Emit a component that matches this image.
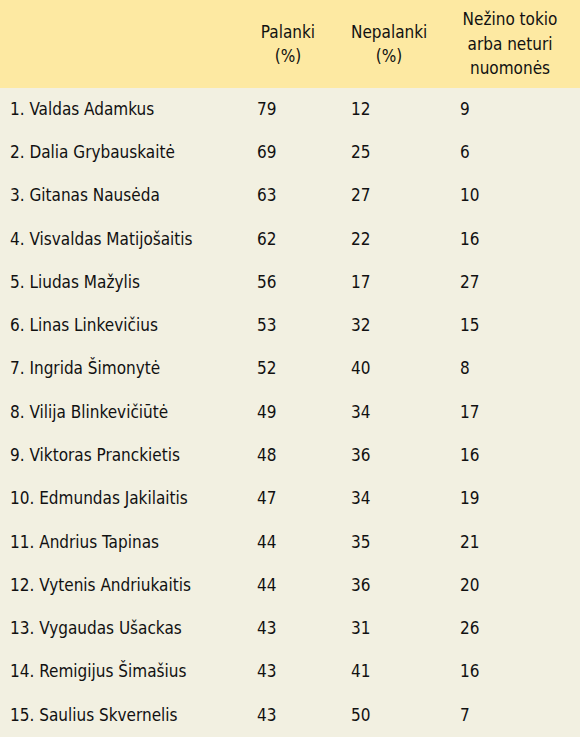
import React from "react";

const rows: [string, number, number, number][] = [
  ["1. Valdas Adamkus", 79, 12, 9],
  ["2. Dalia Grybauskaitė", 69, 25, 6],
  ["3. Gitanas Nausėda", 63, 27, 10],
  ["4. Visvaldas Matijošaitis", 62, 22, 16],
  ["5. Liudas Mažylis", 56, 17, 27],
  ["6. Linas Linkevičius", 53, 32, 15],
  ["7. Ingrida Šimonytė", 52, 40, 8],
  ["8. Vilija Blinkevičiūtė", 49, 34, 17],
  ["9. Viktoras Pranckietis", 48, 36, 16],
  ["10. Edmundas Jakilaitis", 47, 34, 19],
  ["11. Andrius Tapinas", 44, 35, 21],
  ["12. Vytenis Andriukaitis", 44, 36, 20],
  ["13. Vygaudas Ušackas", 43, 31, 26],
  ["14. Remigijus Šimašius", 43, 41, 16],
  ["15. Saulius Skvernelis", 43, 50, 7],
];

const cols = "grid grid-cols-[247px_94px_109px_1fr]";

export default function App() {
  return (
    <div
      className="w-[580px] h-[737px] bg-[#f2f0e1] text-[#111] text-[17px]"
      style={{ fontFamily: '"DejaVu Sans Condensed", "DejaVu Sans", sans-serif' }}
    >
      <div className={`${cols} h-[88px] bg-[#fde9a2] items-center leading-[24.5px]`}>
        <div />
        <div className="pl-[10px]">
          <div className="w-[62px] text-center whitespace-nowrap">
            Palanki
            <br />
            (%)
          </div>
        </div>
        <div className="pl-[10px]">
          <div className="w-[76px] text-center whitespace-nowrap">
            Nepalanki
            <br />
            (%)
          </div>
        </div>
        <div className="pl-[10px]">
          <div className="w-[100px] text-center whitespace-nowrap">
            Nežino tokio
            <br />
            arba neturi
            <br />
            nuomonės
          </div>
        </div>
      </div>
      {rows.map(([name, a, b, c]) => (
        <div key={name} className={`${cols} h-[43.27px] items-center`}>
          <div className="pl-[10px]">{name}</div>
          <div className="pl-[10px]">{a}</div>
          <div className="pl-[10px]">{b}</div>
          <div className="pl-[10px]">{c}</div>
        </div>
      ))}
    </div>
  );
}
